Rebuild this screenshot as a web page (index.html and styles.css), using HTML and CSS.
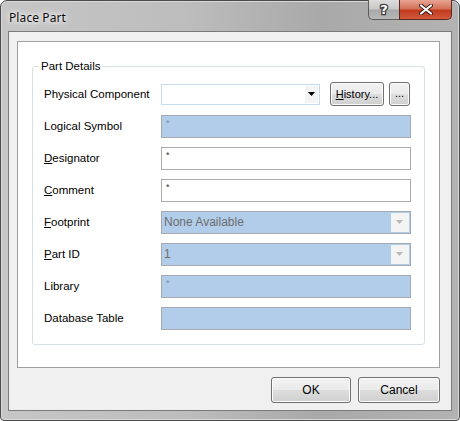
FILE: index.html
```html
<!DOCTYPE html>
<html>
<head>
<meta charset="utf-8">
<link rel="stylesheet" href="styles.css">
</head>
<body>
<div class="window">
  <div class="titlebar">
    <div class="title">Place Part</div>
    <div class="caption-btns">
      <div class="cbtn help"><span class="q">?</span></div>
      <div class="cbtn close">
        <svg width="14" height="11" viewBox="0 0 14 11"><path d="M2 1.5 L12 9.5 M12 1.5 L2 9.5" stroke="#3a1a14" stroke-width="4" stroke-linecap="round"/><path d="M2 1.5 L12 9.5 M12 1.5 L2 9.5" stroke="#ffffff" stroke-width="2.2" stroke-linecap="round"/></svg>
      </div>
    </div>
  </div>
  <div class="client">
    <div class="panel">
      <div class="group">
        <div class="legend">Part Details</div>
        <div class="row">
          <div class="label">Physical Component</div>
          <div class="phys">
            <div class="combo"><span class="combo-arrow"><svg width="8" height="5" viewBox="0 0 8 5"><path d="M0 0 H7 L3.5 4 Z" fill="#000"/></svg></span></div>
            <div class="btn hist"><u>H</u>istory...</div>
            <div class="btn dots">...</div>
          </div>
        </div>
        <div class="row">
          <div class="label">Logical Symbol</div>
          <div class="field ro"><span class="star">*</span></div>
        </div>
        <div class="row">
          <div class="label"><u>D</u>esignator</div>
          <div class="field"><span class="star">*</span></div>
        </div>
        <div class="row">
          <div class="label"><u>C</u>omment</div>
          <div class="field"><span class="star">*</span></div>
        </div>
        <div class="row">
          <div class="label"><u>F</u>ootprint</div>
          <div class="field ro dd"><span class="val">None Available</span><span class="dd-btn"><svg width="8" height="5" viewBox="0 0 8 5"><path d="M0 0 H7 L3.5 4 Z" fill="#b9b9b9"/></svg></span></div>
        </div>
        <div class="row">
          <div class="label"><u>P</u>art ID</div>
          <div class="field ro dd"><span class="val">1</span><span class="dd-btn"><svg width="8" height="5" viewBox="0 0 8 5"><path d="M0 0 H7 L3.5 4 Z" fill="#b9b9b9"/></svg></span></div>
        </div>
        <div class="row">
          <div class="label">Library</div>
          <div class="field ro"><span class="star">*</span></div>
        </div>
        <div class="row">
          <div class="label">Database Table</div>
          <div class="field ro"></div>
        </div>
      </div>
    </div>
    <div class="footer">
      <div class="btn big">OK</div>
      <div class="btn big cancel">Cancel</div>
    </div>
  </div>
</div>
</body>
</html>
```
FILE: styles.css
```css
html, body {
  margin: 0;
  padding: 0;
  background: #ffffff;
}
body {
  width: 460px;
  height: 421px;
  font-family: "Liberation Sans", Arial, sans-serif;
  font-size: 11.5px;
  color: #000;
}
.window {
  box-sizing: border-box;
  width: 460px;
  height: 421px;
  border: 1px solid #4b4b4b;
  border-radius: 7px 7px 4px 4px;
  background: linear-gradient(90deg, #c6c6c6 0%, #bdbdbd 40%, #a9a9a9 70%, #b3b3b3 100%);
  display: flex;
  flex-direction: column;
  padding: 0 7px 9px 7px;
  box-shadow: inset 0 0 0 1px #d8d8d8;
}
.titlebar {
  height: 30px;
  display: flex;
  justify-content: space-between;
  align-items: flex-start;
  flex: none;
  position: relative;
}
.title {
  margin: 8px 0 0 1px;
  font-family: "Noto Sans", "Liberation Sans", sans-serif;
  font-size: 12px;
  color: #0d0d0d;
  text-shadow: 0 0 8px #ececec, 0 0 6px #f0f0f0, 0 0 3px #f4f4f4;
  letter-spacing: 0.1px;
}
.caption-btns {
  display: flex;
  margin-top: -1px;
  margin-right: 0;
}
.cbtn {
  height: 20px;
  box-sizing: border-box;
  border: 1px solid #5c5c5c;
  border-top: none;
  display: flex;
  align-items: center;
  justify-content: center;
}
.help {
  width: 31px;
  border-radius: 0 0 0 5px;
  background: linear-gradient(180deg, #dcdcdc 0%, #c9c9c9 45%, #a9a9a9 55%, #b8b8b8 100%);
  border-right: none;
}
.q {
  font-family: "DejaVu Sans", sans-serif;
  font-weight: bold;
  font-size: 13px;
  line-height: 14px;
  color: #ffffff;
  -webkit-text-stroke: 2.5px #3c3c3c;
  paint-order: stroke fill;
}
.close {
  width: 53px;
  border-radius: 0 0 5px 0;
  background: linear-gradient(180deg, #e8a593 0%, #d4725a 45%, #c23a1d 55%, #d15b3e 100%);
  border-color: #5a2a20;
}
.client {
  flex: 1;
  box-sizing: border-box;
  background: #f0f0f0;
  border: 1px solid #7a7a7a;
  display: flex;
  flex-direction: column;
  padding: 9px 11px 7px 8px;
}
.panel {
  height: 327px;
  box-sizing: border-box;
  background: #ffffff;
  border: 1px solid #a0a0a0;
  padding: 24px 14px 22px 14px;
}
.group {
  position: relative;
  height: 100%;
  box-sizing: border-box;
  border: 1px solid #d5dfe5;
  border-radius: 3px;
  padding: 11px 13px 0 11px;
}
.legend {
  position: absolute;
  top: -8px;
  left: 6px;
  padding: 0 2px;
  background: #ffffff;
  line-height: 14px;
}
.row {
  height: 32px;
  display: grid;
  grid-template-columns: 117px 1fr;
  align-items: center;
}
.label {
  white-space: nowrap;
}
.phys {
  display: flex;
  align-items: center;
}
.combo {
  width: 159px;
  height: 21px;
  box-sizing: border-box;
  border: 1px solid #c5dbef;
  background: #fff;
  display: flex;
  justify-content: flex-end;
  align-items: stretch;
  padding: 1px;
}
.combo-arrow {
  width: 13px;
  background: #f4f4f4;
  display: flex;
  align-items: center;
  justify-content: center;
}
.btn {
  box-sizing: border-box;
  border: 1px solid #707070;
  border-radius: 3px;
  background: linear-gradient(180deg, #f2f2f2 0%, #ebebeb 48%, #dddddd 52%, #cfcfcf 100%);
  box-shadow: inset 0 0 0 1px #fcfcfc;
  display: flex;
  align-items: center;
  justify-content: center;
  color: #000;
}
.hist {
  width: 54px;
  height: 24px;
  margin-left: 10px;
  font-size: 11px;
}
.dots {
  width: 21px;
  height: 24px;
  margin-left: 5px;
  align-items: flex-end;
  padding-bottom: 6px;
  font-size: 11px;
}
.field {
  height: 23px;
  box-sizing: border-box;
  border: 1px solid #acacac;
  background: #ffffff;
  width: 250px;
  position: relative;
  display: flex;
  align-items: flex-start;
}
.field.ro {
  background: #b2cdea;
  border-color: #a4aab0;
}
.star {
  font-size: 9px;
  line-height: 9px;
  margin: 3px 0 0 4px;
  color: #333;
}
.field.ro .star {
  color: #7a8ea6;
}
.dd {
  align-items: center;
  justify-content: space-between;
}
.val {
  color: #6d6d6d;
  font-size: 12px;
  padding-left: 2px;
}
.dd-btn {
  width: 18px;
  align-self: stretch;
  margin: 1px;
  background: #f4f4f4;
  display: flex;
  align-items: center;
  justify-content: center;
}
.footer {
  flex: 1;
  display: flex;
  justify-content: flex-end;
  align-items: flex-end;
  gap: 7px;
}
.big {
  width: 80px;
  height: 26px;
  font-size: 12px;
}
.cancel {
  width: 82px;
}
```
